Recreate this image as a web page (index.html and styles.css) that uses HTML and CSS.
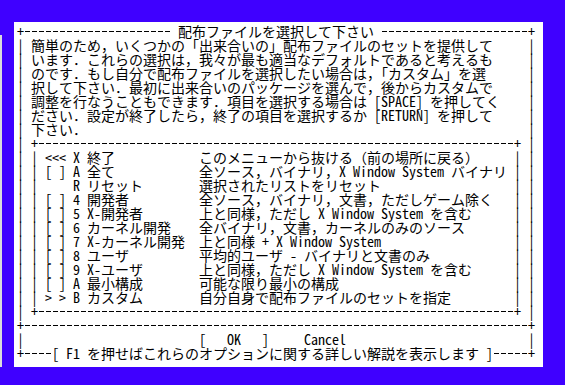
FILE: index.html
```html
<!DOCTYPE html>
<html lang="ja">
<head>
    <meta charset="UTF-8">
    <meta name="viewport" content="width=device-width, initial-scale=1.0">
    <title>配布ファイルを選択して下さい</title>
    <link rel="stylesheet" href="styles.css">
</head>
<body>
    <div class="screen">
        <div class="back-edge"></div>

        <div class="dialog">
            <!-- Title -->
            <div class="line">
                <span class="c">+</span><span class="dash lead"></span><span class="title">配布ファイルを選択して下さい</span><span class="dash"></span><span class="c">+</span>
            </div>

            <!-- Message -->
            <div class="line"><span class="c">|</span><span class="msg">簡単のため，いくつかの「出来合いの」配布ファイルのセットを提供して</span><span class="c">|</span></div>
            <div class="line"><span class="c">|</span><span class="msg">います．これらの選択は，我々が最も適当なデフォルトであると考えるも</span><span class="c">|</span></div>
            <div class="line"><span class="c">|</span><span class="msg">のです．もし自分で配布ファイルを選択したい場合は，「カスタム」を選</span><span class="c">|</span></div>
            <div class="line"><span class="c">|</span><span class="msg">択して下さい．最初に出来合いのパッケージを選んで，後からカスタムで</span><span class="c">|</span></div>
            <div class="line"><span class="c">|</span><span class="msg">調整を行なうこともできます．項目を選択する場合は [SPACE] を押してく</span><span class="c">|</span></div>
            <div class="line"><span class="c">|</span><span class="msg">ださい．設定が終了したら，終了の項目を選択するか [RETURN] を押して</span><span class="c">|</span></div>
            <div class="line"><span class="c">|</span><span class="msg">下さい．</span><span class="c">|</span></div>

            <!-- Checklist -->
            <div class="line">
                <span class="c">|</span><span class="c"></span><span class="c">+</span><span class="dash"></span><span class="c">+</span><span class="c"></span><span class="c">|</span>
            </div>
            <div class="line"><span class="c">|</span><span class="c"></span><span class="c">|</span>
                <span class="item"><span class="mark">&lt;&lt;&lt;</span><span class="tag">X</span><span class="name">終了</span><span class="desc">このメニューから抜ける（前の場所に戻る）</span></span>
                <span class="c">|</span><span class="c"></span><span class="c">|</span></div>
            <div class="line"><span class="c">|</span><span class="c"></span><span class="c">|</span>
                <span class="item"><span class="mark">[ ]</span><span class="tag">A</span><span class="name">全て</span><span class="desc">全ソース，バイナリ，X Window System バイナリ</span></span>
                <span class="c">|</span><span class="c"></span><span class="c">|</span></div>
            <div class="line"><span class="c">|</span><span class="c"></span><span class="c">|</span>
                <span class="item"><span class="mark"></span><span class="tag">R</span><span class="name">リセット</span><span class="desc">選択されたリストをリセット</span></span>
                <span class="c">|</span><span class="c"></span><span class="c">|</span></div>
            <div class="line"><span class="c">|</span><span class="c"></span><span class="c">|</span>
                <span class="item"><span class="mark">[ ]</span><span class="tag">4</span><span class="name">開発者</span><span class="desc">全ソース，バイナリ，文書，ただしゲーム除く</span></span>
                <span class="c">|</span><span class="c"></span><span class="c">|</span></div>
            <div class="line"><span class="c">|</span><span class="c"></span><span class="c">|</span>
                <span class="item"><span class="mark">[ ]</span><span class="tag">5</span><span class="name">X-開発者</span><span class="desc">上と同様，ただし X Window System を含む</span></span>
                <span class="c">|</span><span class="c"></span><span class="c">|</span></div>
            <div class="line"><span class="c">|</span><span class="c"></span><span class="c">|</span>
                <span class="item"><span class="mark">[ ]</span><span class="tag">6</span><span class="name">カーネル開発</span><span class="desc">全バイナリ，文書，カーネルのみのソース</span></span>
                <span class="c">|</span><span class="c"></span><span class="c">|</span></div>
            <div class="line"><span class="c">|</span><span class="c"></span><span class="c">|</span>
                <span class="item"><span class="mark">[ ]</span><span class="tag">7</span><span class="name">X-カーネル開発</span><span class="desc">上と同様 + X Window System</span></span>
                <span class="c">|</span><span class="c"></span><span class="c">|</span></div>
            <div class="line"><span class="c">|</span><span class="c"></span><span class="c">|</span>
                <span class="item"><span class="mark">[ ]</span><span class="tag">8</span><span class="name">ユーザ</span><span class="desc">平均的ユーザ - バイナリと文書のみ</span></span>
                <span class="c">|</span><span class="c"></span><span class="c">|</span></div>
            <div class="line"><span class="c">|</span><span class="c"></span><span class="c">|</span>
                <span class="item"><span class="mark">[ ]</span><span class="tag">9</span><span class="name">X-ユーザ</span><span class="desc">上と同様，ただし X Window System を含む</span></span>
                <span class="c">|</span><span class="c"></span><span class="c">|</span></div>
            <div class="line"><span class="c">|</span><span class="c"></span><span class="c">|</span>
                <span class="item"><span class="mark">[ ]</span><span class="tag">A</span><span class="name">最小構成</span><span class="desc">可能な限り最小の構成</span></span>
                <span class="c">|</span><span class="c"></span><span class="c">|</span></div>
            <div class="line"><span class="c">|</span><span class="c"></span><span class="c">|</span>
                <span class="item"><span class="mark">&gt; &gt;</span><span class="tag">B</span><span class="name">カスタム</span><span class="desc">自分自身で配布ファイルのセットを指定</span></span>
                <span class="c">|</span><span class="c"></span><span class="c">|</span></div>
            <div class="line">
                <span class="c">|</span><span class="c"></span><span class="c">+</span><span class="dash"></span><span class="c">+</span><span class="c"></span><span class="c">|</span>
            </div>

            <!-- Buttons -->
            <div class="line"><span class="c">+</span><span class="dash"></span><span class="c">+</span></div>
            <div class="line"><span class="c">|</span>
                <span class="buttons"><span class="btn">[   OK   ]</span><span class="btn off">Cancel</span></span>
                <span class="c">|</span></div>
            <div class="line">
                <span class="c">+</span><span class="dash short"></span><span class="help">[ F1 を押せばこれらのオプションに関する詳しい解説を表示します ]</span><span class="dash"></span><span class="c">+</span>
            </div>
        </div>
    </div>
</body>
</html>
```

FILE: styles.css
```css
body {
    margin: 0;
    background: #3f00ff;
    font-family: "Noto Sans Mono CJK JP", "Noto Sans CJK JP", "DejaVu Sans Mono", monospace;
    font-size: 14px;
    color: #000;
}
.screen {
    display: flex;
    align-items: flex-start;
    height: 385px;
    overflow: hidden;
}
.back-edge {
    width: 2px;
    height: 332px;
    margin-top: 35px;
    background: #dcdcdc;
}
.dialog {
    box-sizing: border-box;
    width: 529px;
    height: 345px;
    margin: 22px 0 0 12px;
    padding: 2px 8px 7px 3px;
    background: #fff;
}
.line {
    display: flex;
    width: 518px;
    height: 14px;
    line-height: 14px;
}
.line > * {
    white-space: pre;
}
/* one text cell */
.c {
    flex: none;
    width: 7px;
    text-align: center;
}
.dash {
    flex: 1;
    background-image: linear-gradient(to right, #000 5px, transparent 5px);
    background-size: 7px 1px;
    background-position: 1px 7px;
    background-repeat: repeat-x;
}
.dash.lead {
    flex: none;
    width: 147px;
}
.dash.short {
    flex: none;
    width: 28px;
}
.title {
    flex: none;
    padding: 0 7px;
}
.help {
    flex: none;
}
.msg {
    flex: none;
    width: 504px;
    box-sizing: border-box;
    padding-left: 7px;
}
.item {
    display: flex;
    flex: 1;
    padding-left: 7px;
}
.mark {
    flex: none;
    width: 21px;
    margin-right: 7px;
}
.tag {
    flex: none;
    width: 7px;
    margin-right: 7px;
}
.name {
    flex: none;
    width: 112px;
}
.desc {
    flex: 1;
}
.buttons {
    display: flex;
    flex: 1;
    padding-left: 175px;
}
.btn {
    flex: none;
}
.btn.off {
    margin-left: 35px;
}
```
